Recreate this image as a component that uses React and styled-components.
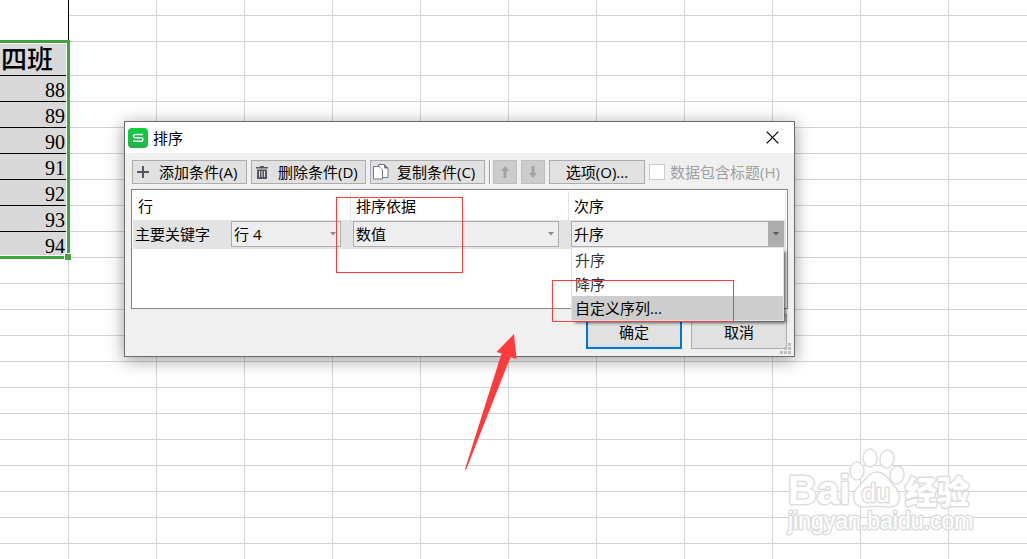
import React, { useState } from 'react';
import styled, { createGlobalStyle } from 'styled-components';

const GlobalStyle = createGlobalStyle`
  * {
    box-sizing: border-box;
  }

  body {
    margin: 0;
    background: #fff;
    color: #000;
    font: 15px/20px 'Open Sans', 'Noto Sans CJK SC', sans-serif;
  }

  button, select, input {
    font: inherit;
    color: inherit;
    margin: 0;
  }
`;

const COLUMNS = 11;
const scores = [88, 89, 90, 91, 92, 93, 94];
const emptyRows = Array.from({ length: 12 }, (_, i) => i);
const orders = ['升序', '降序', '自定义序列...'];

const EmptyCells = () =>
  Array.from({ length: COLUMNS }, (_, i) => <Cell key={i} />);

const Sheet = () => (
  <SheetTable>
    <colgroup>
      <col style={{ width: 69 }} />
      {Array.from({ length: COLUMNS }, (_, i) => (
        <col key={i} style={{ width: 88 }} />
      ))}
    </colgroup>
    <tbody>
      <Row $height={16}>
        <BlankCell />
        <EmptyCells />
      </Row>
      <Row $height={26}>
        <BlankCell />
        <EmptyCells />
      </Row>
      <Row $height={34}>
        <ClassName scope="col">四班</ClassName>
        <EmptyCells />
      </Row>
      {scores.map((score) => (
        <Row $height={26} key={score}>
          <Score>{score}</Score>
          <EmptyCells />
        </Row>
      ))}
      {emptyRows.map((row) => (
        <Row $height={26} key={row}>
          <Cell />
          <EmptyCells />
        </Row>
      ))}
    </tbody>
  </SheetTable>
);

const LogoIcon = () => (
  <svg width="20" height="20" viewBox="0 0 20 20">
    <defs>
      <linearGradient id="logo" x1="0" y1="0" x2="0" y2="1">
        <stop offset="0" stopColor="#0ccf3f" />
        <stop offset="1" stopColor="#24b14c" />
      </linearGradient>
    </defs>
    <rect width="20" height="20" rx="4" fill="url(#logo)" />
    <path d="M15 6.5H7Q5.5 6.5 5.5 8T7 9.8h6.500q1.500 0 1.500 1.700t-1.500 1.800H5" fill="none" stroke="#fff" strokeWidth="1.6" />
  </svg>
);

const CloseIcon = () => (
  <svg width="13" height="13" viewBox="0 0 13 13">
    <path d="M.7.700l11.600 11.600M12.300.700L.7 12.300" stroke="#000" strokeWidth="1.200" />
  </svg>
);

const PlusIcon = () => (
  <svg width="12" height="12" viewBox="0 0 12 12">
    <path d="M0 6h12M6 0v12" stroke="#55555f" strokeWidth="2" />
  </svg>
);

const TrashIcon = () => (
  <svg width="12" height="13" viewBox="0 0 12 13">
    <path d="M4 0h4v1h4v1.500H0V1h4zM1 3.500h10V13H1z" fill="#55555f" />
    <path d="M3.500 5v6M6 5v6M8.500 5v6" stroke="#e1e1e1" />
  </svg>
);

const CopyIcon = () => (
  <svg width="16" height="16" viewBox="0 0 16 16" fill="#fff" stroke="#77778a">
    <path d="M5.500.500h6l3.500 3.500v9.500H5.500z" />
    <path d="M11.500.500v3.500H15z" fill="#77778a" />
    <path d="M.5 2.500h6l3 3v9.500h-9z" />
    <path d="M6.500 2.500v3h3z" fill="#dfe5f5" stroke="none" />
  </svg>
);

const MoveIcon = ({ down }) => (
  <svg width="8" height="12" viewBox="0 0 8 12" fill="#a3a3a3">
    <path d={down ? 'M2.500 0h3v7H8l-4 5-4-5h2.500z' : 'M2.500 12h3V5H8L4 0 0 5h2.500z'} />
  </svg>
);

const GripIcon = () => (
  <svg width="11" height="11" viewBox="0 0 11 11" fill="#bdbdbd">
    <path d="M8 0h3v3H8zM4 4h3v3H4zM8 4h3v3H8zM0 8h3v3H0zM4 8h3v3H4zM8 8h3v3H8z" />
  </svg>
);

const ArrowIcon = () => (
  <svg width="6" height="4" viewBox="0 0 6 4">
    <path d="M0 0h6L3 3.500z" fill="currentColor" />
  </svg>
);

const SelectBox = ({ id, options, open, value, onChange }) => (
  <SelectWrapper>
    <Select id={id} value={value} onChange={onChange}>
      {options.map((option) => (
        <option key={option}>{option}</option>
      ))}
    </Select>
    <SelectArrow $open={open}>
      <ArrowIcon />
    </SelectArrow>
    {open && (
      <OptionList role="listbox" aria-label="次序">
        {options.map((option) => (
          <Option
            key={option}
            role="option"
            aria-selected={option === value}
            $active={option === '自定义序列...'}
          >
            {option}
          </Option>
        ))}
      </OptionList>
    )}
  </SelectWrapper>
);

const SortDialog = () => {
  const [order, setOrder] = useState('升序');

  return (
    <Dialog role="dialog" aria-labelledby="dialog-title">
      <TitleBar>
        <LogoIcon />
        <Title id="dialog-title">排序</Title>
        <CloseButton type="button" aria-label="关闭">
          <CloseIcon />
        </CloseButton>
      </TitleBar>
      <DialogBody>
        <Toolbar>
          <ToolButton type="button">
            <IconSlot><PlusIcon /></IconSlot>
            添加条件(A)
          </ToolButton>
          <ToolButton type="button">
            <IconSlot><TrashIcon /></IconSlot>
            删除条件(D)
          </ToolButton>
          <ToolButton type="button">
            <IconSlot><CopyIcon /></IconSlot>
            复制条件(C)
          </ToolButton>
          <MoveGroup>
            <MoveButton type="button" disabled aria-label="上移"><MoveIcon /></MoveButton>
            <MoveButton type="button" disabled aria-label="下移"><MoveIcon down /></MoveButton>
          </MoveGroup>
          <OptionsButton type="button">选项(O)...</OptionsButton>
          <CheckLabel>
            <CheckBox type="checkbox" disabled />
            数据包含标题(H)
          </CheckLabel>
        </Toolbar>

        <Conditions>
          <HeaderRow>
            <HeaderCell>行</HeaderCell>
            <HeaderCell as="label" htmlFor="basis">排序依据</HeaderCell>
            <HeaderCell as="label" htmlFor="order">次序</HeaderCell>
          </HeaderRow>
          <ConditionRow>
            <ConditionCell>
              <KeyLabel htmlFor="key">主要关键字</KeyLabel>
              <SelectBox id="key" options={['行 4']} />
            </ConditionCell>
            <ConditionCell>
              <SelectBox id="basis" options={['数值']} />
            </ConditionCell>
            <ConditionCell $last>
              <SelectBox
                id="order"
                options={orders}
                value={order}
                onChange={(e) => setOrder(e.target.value)}
                open
              />
            </ConditionCell>
          </ConditionRow>
        </Conditions>

        <Footer>
          <FooterButton type="button" $primary>确定</FooterButton>
          <FooterButton type="button">取消</FooterButton>
        </Footer>
      </DialogBody>
      <Grip><GripIcon /></Grip>
    </Dialog>
  );
};

const Watermark = () => (
  <WatermarkSvg width="192" height="94" viewBox="0 0 192 94">
    <g fill="#fff" fillOpacity="0.8" stroke="#dedede" strokeWidth="1.500">
      <ellipse cx="73" cy="29" rx="7" ry="9" />
      <ellipse cx="86" cy="16" rx="7" ry="9" />
      <ellipse cx="103" cy="17" rx="7" ry="9" transform="rotate(12 103 17)" />
      <ellipse cx="113" cy="33" rx="7" ry="9" transform="rotate(10 113 33)" />
      <path d="M93 30c9 0 12 9 18 15 8 8 5 21-6 20-8-1-17-1-24 0-12 1-15-12-7-20 7-6 10-15 19-15z" />
    </g>
    <WatermarkText x="4" y="62" fontSize="40" fontWeight="700">Bai</WatermarkText>
    <WatermarkText x="78" y="60" fontSize="25">du</WatermarkText>
    <WatermarkText x="121" y="62" fontSize="32" fontWeight="900">经验</WatermarkText>
    <WatermarkText x="4" y="87" fontSize="23">jingyan.baidu.com</WatermarkText>
  </WatermarkSvg>
);

const App = () => (
  <Page>
    <GlobalStyle />
    <Sheet />
    <Selection />
    <Watermark />
    <SortDialog />
    <Highlight $x={336} $y={197} $width={127} $height={76} />
    <Highlight $x={552} $y={280} $width={182} $height={42} />
    <PointerSvg width="54" height="138" viewBox="0 0 54 138">
      <path d="M51 0L33.500 18l5 1.500L2 135l1 1L47.500 23l6 2z" fill="#ff3b3b" />
    </PointerSvg>
  </Page>
);

const Page = styled.main`
  position: relative;
  height: 100vh;
  overflow: hidden;
`;

const SheetTable = styled.table`
  width: max-content;
  min-width: 100%;
  table-layout: fixed;
  border-collapse: separate;
  border-spacing: 0;
`;

const Row = styled.tr`
  height: ${props => props.$height}px;
`;

const Cell = styled.td`
  padding: 0;
  border-right: 1px solid #d4d4d4;
  border-bottom: 1px solid #d4d4d4;
`;

const BlankCell = styled(Cell)`
  border-right-color: #000;
  border-bottom: 0;
`;

const ClassName = styled.th`
  padding: 0 16px 0 0;
  border-bottom: 1px solid #000;
  background: #d9d9d9;
  font-size: 26px;
  font-weight: 500;
  line-height: 32px;
  text-align: right;
  white-space: nowrap;
`;

const Score = styled(Cell)`
  padding: 2px 4px 0 0;
  border-right: 0;
  border-bottom-color: #000;
  background: #d9d9d9;
  font: 20px/22px 'Liberation Serif', serif;
  text-align: right;
`;

/* frame around the selected cells, with its drag handle */
const Selection = styled.div`
  position: absolute;
  left: -4px;
  top: 40px;
  width: 74px;
  height: 219px;
  border: 3px solid #3fa63f;
  box-shadow: inset 0 0 0 1px #fff;

  &::after {
    content: '';
    position: absolute;
    right: -4px;
    bottom: -4px;
    width: 6px;
    height: 6px;
    border: solid #fff;
    border-width: 1px 0 0 1px;
    background: #3fa63f;
  }
`;

const Dialog = styled.section`
  position: absolute;
  left: 124px;
  top: 121px;
  width: 671px;
  border: 1px solid #6d6d6d;
  background: #f0f0f0;
  box-shadow: 0 3px 16px rgba(0, 0, 0, 0.4);
`;

const TitleBar = styled.header`
  display: flex;
  align-items: center;
  gap: 5px;
  height: 31px;
  padding: 0 15px 0 3px;
  background: #fff;
`;

const Title = styled.h1`
  flex: 1;
  margin: 0;
  font-size: 15px;
  font-weight: 400;
`;

const CloseButton = styled.button`
  display: flex;
  padding: 0;
  border: 0;
  background: none;
`;

const DialogBody = styled.div`
  display: flex;
  flex-direction: column;
  gap: 5px;
  padding: 7px 6px;
`;

const Toolbar = styled.div`
  display: flex;
  align-items: center;
  gap: 4px;
  padding-left: 1px;
`;

const Button = styled.button`
  display: flex;
  align-items: center;
  justify-content: center;
  height: 24px;
  padding: 0;
  border: 1px solid #adadad;
  background: #e1e1e1;
  white-space: nowrap;
`;

const ToolButton = styled(Button)`
  justify-content: flex-start;
  gap: 8px;
  width: 115px;
  padding-left: 2px;
`;

const IconSlot = styled.span`
  display: flex;
  justify-content: center;
  width: 16px;
`;

const MoveGroup = styled.div`
  display: flex;
  gap: 4px;
  padding-left: 3px;
  border-left: 1px solid #a0a0a0;
  box-shadow: inset 1px 0 #fff;
`;

const MoveButton = styled(Button)`
  width: 24px;
  border-color: #bfbfbf;
  background: #ccc;
`;

const OptionsButton = styled(Button)`
  width: 96px;
`;

const CheckLabel = styled.label`
  display: flex;
  align-items: center;
  gap: 5px;
  color: #a0a0a0;
  white-space: nowrap;
`;

const CheckBox = styled.input`
  appearance: none;
  width: 16px;
  height: 16px;
  border: 1px solid #ccc;
  background: #fff;
`;

const Conditions = styled.div`
  min-height: 120px;
  padding: 0 1px;
  border: 1px solid #828790;
  background: #fff;
`;

const HeaderRow = styled.div`
  display: grid;
  grid-template-columns: 218px 218px 1fr;
  height: 30px;
  padding-top: 1px;
`;

const HeaderCell = styled.span`
  padding: 5px;
  border-right: 1px solid #e5e5e5;
`;

const ConditionRow = styled.div`
  display: grid;
  grid-template-columns: 218px 218px 1fr;
  background: #e3e3e3;
`;

const ConditionCell = styled.div`
  display: flex;
  align-items: center;
  padding: 1px ${props => (props.$last ? '2px' : '10px')} 2px 2px;
`;

const KeyLabel = styled.label`
  width: 96px;
`;

const SelectWrapper = styled.div`
  position: relative;
  flex: 1;
`;

const Select = styled.select`
  appearance: none;
  display: block;
  width: 100%;
  height: 26px;
  padding: 0 20px 0 2px;
  border: 1px solid #adadad;
  border-radius: 0;
  background: #eee;
`;

const SelectArrow = styled.span`
  position: absolute;
  top: 0;
  right: 0;
  display: flex;
  align-items: center;
  justify-content: center;
  width: 16px;
  height: 26px;
  background: ${props => (props.$open ? '#adadad' : 'none')};
  color: ${props => (props.$open ? '#5a5a5a' : '#8c8c8c')};
  pointer-events: none;
`;

const OptionList = styled.ul`
  position: absolute;
  z-index: 1;
  top: 26px;
  left: 0;
  right: 0;
  margin: 0;
  padding: 0;
  border: 1px solid #e3e3e3;
  background: #fff;
  box-shadow: 3px 3px 3px -1px rgba(0, 0, 0, 0.6);
  list-style: none;
`;

const Option = styled.li`
  padding: 2px 3px;
  background: ${props => (props.$active ? '#cdcdcd' : '#fff')};
  color: ${props => (props.$active ? '#000' : '#333')};
`;

const Footer = styled.footer`
  display: flex;
  justify-content: flex-end;
  gap: 9px;
  padding-right: 1px;
`;

const FooterButton = styled(Button)`
  width: 96px;
  height: 35px;
  border: ${props => (props.$primary ? '2px solid #0078d7' : '1px solid #adadad')};
`;

const Grip = styled.span`
  position: absolute;
  right: 3px;
  bottom: 2px;
  display: flex;
`;

const Highlight = styled.div`
  position: absolute;
  z-index: 2;
  left: ${props => props.$x}px;
  top: ${props => props.$y}px;
  width: ${props => props.$width}px;
  height: ${props => props.$height}px;
  border: 1px solid #ff3b3b;
  pointer-events: none;
`;

const PointerSvg = styled.svg`
  position: absolute;
  left: 463px;
  top: 334px;
  pointer-events: none;
`;

const WatermarkSvg = styled.svg`
  position: absolute;
  left: 784px;
  top: 442px;
`;

const WatermarkText = styled.text`
  font-family: 'Liberation Sans', 'Noto Sans CJK SC', sans-serif;
  fill: #fff;
  stroke: #dedede;
  stroke-width: 3px;
  stroke-linejoin: round;
  paint-order: stroke;
`;

export default App;
